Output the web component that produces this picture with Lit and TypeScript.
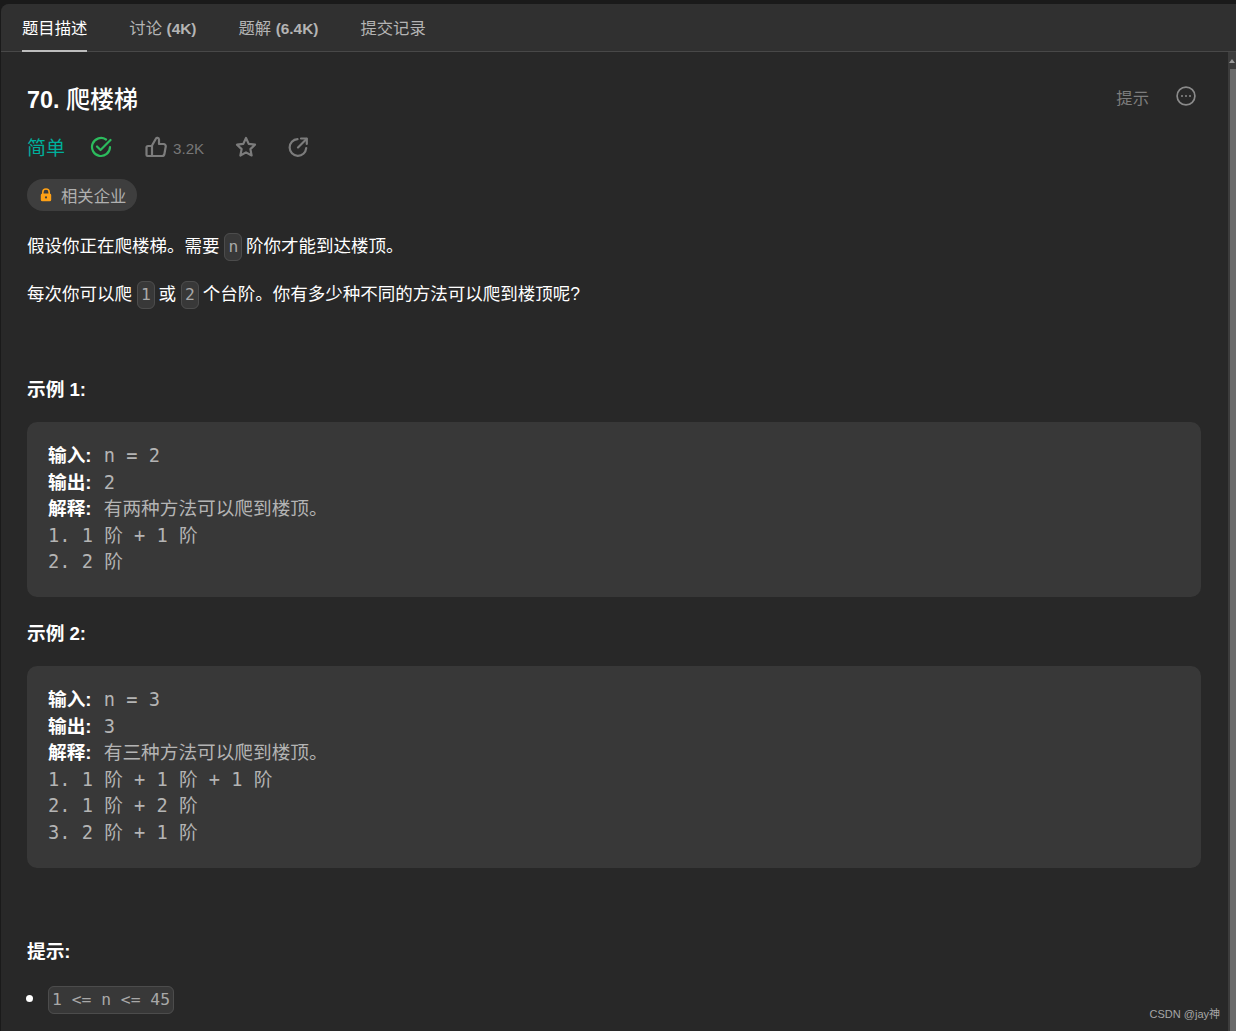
import { LitElement, html, css } from "lit";
import { customElement } from "lit/decorators.js";

const sans = css`"Liberation Sans", "Noto Sans CJK SC", sans-serif`;
const mono = css`"DejaVu Sans Mono", "Noto Sans CJK SC", monospace`;

@customElement("app-root")
export class AppRoot extends LitElement {
  static styles = css`
    :host {
      display: block;
      width: 1236px;
      height: 1031px;
      overflow: hidden;
      background: #1a1a1a;
      font-family: ${sans};
      color: #fff;
      box-sizing: border-box;
      padding-top: 4px;
    }
    .shell {
      height: 1027px;
      margin-left: 1px;
      background: #282828;
      border-radius: 8px 0 0 0;
      display: flex;
      flex-direction: column;
      overflow: hidden;
      position: relative;
    }
    .tabs {
      height: 48px;
      flex: none;
      box-sizing: border-box;
      background: #303030;
      border-bottom: 1px solid #484848;
      display: flex;
      gap: 42px;
      padding-left: 21px;
    }
    .tab {
      height: 48px;
      line-height: 49px;
      font-size: 16.33px;
      color: #b4b4b4;
      white-space: nowrap;
      box-sizing: border-box;
    }
    .tab b { font-weight: 700; font-size: 15.4px; }
    .tab.on { color: #fff; border-bottom: 2px solid #bdbdbd; }
    .main { flex: 1; display: flex; min-height: 0; }
    .content {
      flex: 1;
      padding: 0 27px 0 26px;
      min-width: 0;
    }
    .scroll {
      width: 8px;
      flex: none;
      background: #3c3c3c;
      display: flex;
      flex-direction: column;
      align-items: center;
    }
    .scroll .up {
      height: 17px;
      width: 8px;
      display: flex;
      justify-content: center;
      align-items: center;
    }
    .scroll .thumb { flex: 1; width: 6px; background: #6a6a6a; margin-left: 2px; }
    .titlerow {
      display: flex;
      justify-content: space-between;
      align-items: flex-start;
      height: 34px;
      margin-top: 31px;
    }
    h1 {
      margin: 0;
      font-size: 23.33px;
      line-height: 34px;
      font-weight: 500;
      white-space: nowrap;
    }
    h1 b { font-weight: 700; }
    h1 span { font-size: 24px; }
    .tools {
      display: flex;
      align-items: flex-start;
      gap: 27px;
      color: #7d7d7d;
      font-size: 16.33px;
      margin-right: 5px;
    }
    .tools span { line-height: 32px; margin-top: -1px; }
    .tools svg { margin-top: 3px; display: block; }
    .meta {
      display: flex;
      align-items: center;
      height: 30px;
      margin-top: 15px;
    }
    .easy { color: #00af9b; font-size: 19px; width: 63px; line-height: 30px; margin-top: 3px; }
    .meta svg { display: block; flex: none; }
    .count { color: #777; font-size: 15.2px; margin-left: 6px; width: 31px; margin-top: 2px; }
    .star { margin-left: 30px; }
    .share { margin-left: 29px; }
    .thumbs { margin-left: 33px; }
    .chip {
      margin-top: 17px;
      width: 110px;
      height: 32px;
      border-radius: 16px;
      background: #3e3e3e;
      display: flex;
      align-items: center;
      gap: 8px;
      padding-left: 12px;
      box-sizing: border-box;
      color: #b0b0b0;
      font-size: 16.33px;
      white-space: nowrap;
    }
    p {
      margin: 0;
      font-size: 17.5px;
      line-height: 28px;
      height: 28px;
      color: #fff;
      white-space: nowrap;
      word-spacing: -1px;
    }
    .p1 { margin-top: 21px; }
    .p2 { margin-top: 20px; }
    code {
      font-family: ${mono};
      font-size: 16.33px;
      line-height: 20px;
      color: #a8a8a8;
      background: #383838;
      border: 1px solid #4c4c4c;
      border-radius: 6px;
      padding: 3px 3px 4px;
      margin: 0 0 0 1px;
      word-spacing: 0;
    }
    .h3 {
      font-weight: 700;
      font-size: 18.67px;
      line-height: 28px;
      height: 28px;
      color: #fff;
      white-space: nowrap;
    }
    .ex1 { margin-top: 68px; }
    pre {
      margin: 18px 0 0;
      background: #383838;
      border-radius: 10px;
      padding: 21px 21px 21px;
      font-family: ${mono};
      font-size: 18.67px;
      line-height: 26.6px;
      color: #b4b4b4;
      white-space: pre;
    }
    pre b { color: #fff; font-weight: 700; font-family: ${sans}; margin-right: 1px; }
    pre .cn { font-size: 18.67px; font-family: ${sans}; }
    .ex2 { margin-top: 23px; }
    .ex3 { margin-top: 70px; }
    ul {
      margin: 17px 0 0;
      padding: 0 0 0 20px;
      font-size: 17.5px;
      line-height: 28px;
    }
    li::marker { font-size: 24px; }
    .wm {
      position: absolute;
      right: 16px;
      bottom: 10px;
      font-size: 11px;
      line-height: 14px;
      color: #a6a6a6;
      font-family: ${sans};
    }
  `;

  render() {
    return html`
      <div class="shell">
        <div class="tabs">
          <div class="tab on">题目描述</div>
          <div class="tab">讨论 <b>(4K)</b></div>
          <div class="tab">题解 <b>(6.4K)</b></div>
          <div class="tab">提交记录</div>
        </div>
        <div class="main">
          <div class="content">
            <div class="titlerow">
              <h1><b>70.</b> <span>爬楼梯</span></h1>
              <div class="tools">
                <span>提示</span>
                <svg width="20" height="20" viewBox="0 0 20 20" fill="none">
                  <circle cx="10" cy="10" r="8.9" stroke="#8a8a8a" stroke-width="1.7"></circle>
                  <circle cx="6" cy="10" r="1" fill="#8a8a8a"></circle>
                  <circle cx="10" cy="10" r="1" fill="#8a8a8a"></circle>
                  <circle cx="14" cy="10" r="1" fill="#8a8a8a"></circle>
                </svg>
              </div>
            </div>
            <div class="meta">
              <span class="easy">简单</span>
              <svg width="22" height="22" viewBox="0 0 22 22" fill="none" stroke="#2cbb5d" stroke-width="2.2" stroke-linecap="round" stroke-linejoin="round">
                <path d="M20 11a9 9 0 1 1-4-7.5"></path>
                <path d="M7 10.5l3.5 3.5L20.500 4"></path>
              </svg>
              <svg class="thumbs" width="22" height="22" viewBox="0 0 22 22" fill="none" stroke="#7c7c7c" stroke-width="2.2" stroke-linejoin="round">
                <path d="M7 9.500L11 2.500c.6-1 2.800-.8 3 .8V8h4.500c1.500 0 2.500 1.300 2.200 2.700l-1.300 7.300c-.2 1.100-1.100 2-2.300 2H7z"></path>
                <path d="M7 10H3c-1 0-1.500.6-1.500 1.500V19c0 .600.5 1 1 1H7"></path>
              </svg>
              <span class="count">3.2K</span>
              <svg class="star" width="24" height="24" viewBox="0 0 24 24" fill="none" stroke="#7c7c7c" stroke-width="2.2" stroke-linejoin="round">
                <path d="M12 3l2.700 5.900 6.300.8-4.600 4.400 1.200 6.400L12 17.400l-5.600 3.100 1.200-6.400L3 9.700l6.300-.8z"></path>
              </svg>
              <svg class="share" width="22" height="22" viewBox="0 0 22 22" fill="none" stroke="#7c7c7c" stroke-width="2.200" stroke-linecap="round" stroke-linejoin="round">
                <path d="M10.500 3.200a8.300 8.300 0 1 0 8.700 9"></path>
                <path d="M11 11.500L19.500 3"></path>
                <path d="M14 2.500h5.800V8"></path>
              </svg>
            </div>
            <div class="chip">
              <svg width="14" height="14" viewBox="0 0 14 14">
                <path d="M3.800 6V4.200a3.200 3.200 0 0 1 6.400 0V6" fill="none" stroke="#ffa116" stroke-width="1.600"></path>
                <rect x="1.800" y="5.600" width="10.400" height="7.600" rx="1.500" fill="#ffa116"></rect>
                <circle cx="7" cy="9.400" r="1.100" fill="#3e3e3e"></circle>
              </svg>
              <span>相关企业</span>
            </div>
            <p class="p1">假设你正在爬楼梯。需要 <code>n</code> 阶你才能到达楼顶。</p>
            <p class="p2">每次你可以爬 <code>1</code> 或 <code>2</code> 个台阶。你有多少种不同的方法可以爬到楼顶呢?</p>
            <div class="h3 ex1">示例 1:</div>
            <pre><b>输入:</b> n = 2
<b>输出:</b> 2
<b>解释:</b> <span class="cn">有两种方法可以爬到楼顶。</span>
1. 1 阶 + 1 阶
2. 2 阶</pre>
            <div class="h3 ex2">示例 2:</div>
            <pre><b>输入:</b> n = 3
<b>输出:</b> 3
<b>解释:</b> <span class="cn">有三种方法可以爬到楼顶。</span>
1. 1 阶 + 1 阶 + 1 阶
2. 1 阶 + 2 阶
3. 2 阶 + 1 阶</pre>
            <div class="h3 ex3">提示:</div>
            <ul><li><code>1 &lt;= n &lt;= 45</code></li></ul>
          </div>
          <div class="scroll">
            <div class="up">
              <svg width="6" height="4" viewBox="0 0 6 4"><path d="M3 0l3 4H0z" fill="#9a9a9a"></path></svg>
            </div>
            <div class="thumb"></div>
          </div>
        </div>
        <div class="wm">CSDN @jay神</div>
      </div>
    `;
  }
}
